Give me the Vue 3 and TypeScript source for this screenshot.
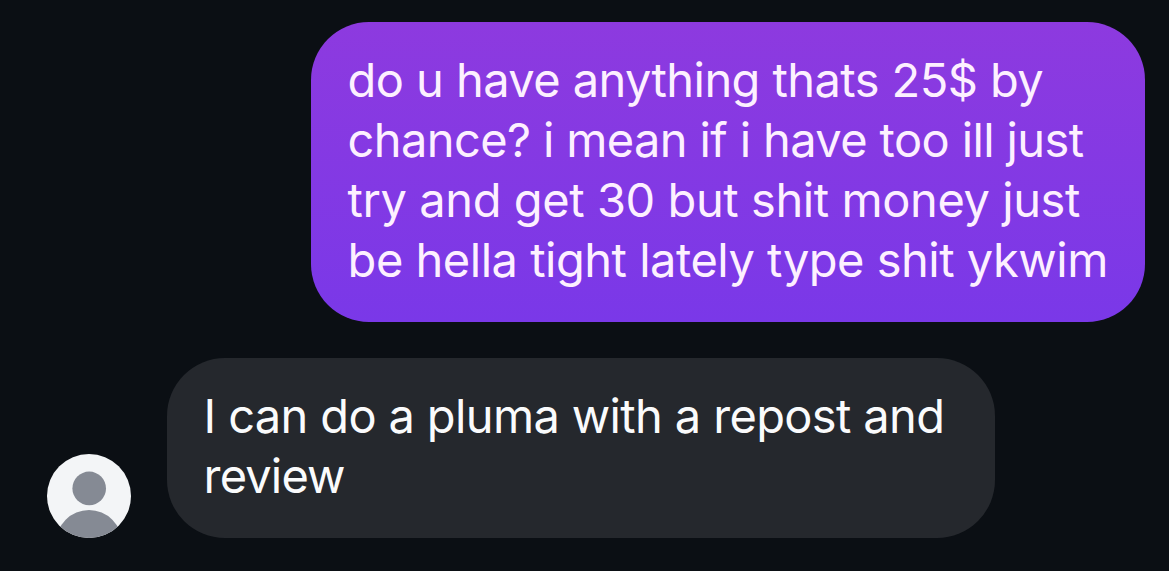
<script setup lang="ts">
interface Line {
  text: string
  fit: string
}

const sent: Line[] = [
  { text: 'do u have anything thats 25$ by', fit: 's1' },
  { text: 'chance? i mean if i have too ill just', fit: 's2' },
  { text: 'try and get 30 but shit money just', fit: 's3' },
  { text: 'be hella tight lately type shit ykwim', fit: 's4' },
]

const received: Line[] = [
  { text: 'I can do a pluma with a repost and', fit: 'r1' },
  { text: 'review', fit: 'r2' },
]
</script>

<template>
  <main class="chat">
    <div class="row row-sent">
      <div class="bubble sent">
        <span v-for="line in sent" :key="line.fit" class="line" :class="line.fit">{{ line.text }}</span>
      </div>
    </div>
    <div class="row row-received">
      <svg class="avatar" viewBox="0 0 84 84" role="img" aria-label="Profile">
        <defs>
          <clipPath id="avatar-clip"><circle cx="42" cy="42" r="42" /></clipPath>
        </defs>
        <g clip-path="url(#avatar-clip)">
          <rect width="84" height="84" fill="#f3f5f7" />
          <circle cx="42.2" cy="34.4" r="16.8" fill="#858a94" />
          <circle cx="42" cy="89" r="33" fill="#858a94" />
        </g>
      </svg>
      <div class="bubble received">
        <span v-for="line in received" :key="line.fit" class="line" :class="line.fit">{{ line.text }}</span>
      </div>
    </div>
  </main>
</template>

<style>
html,
body {
  background: #0b0f14;
}
</style>

<style scoped>
.chat {
  box-sizing: border-box;
  width: 1169px;
  height: 571px;
  padding: 22px 24px 33px 47px;
  display: flex;
  flex-direction: column;
  gap: 36px;
  overflow: hidden;
  background: #0b0f14;
  font-family: Inter, "Liberation Sans", sans-serif;
  font-size: 47px;
  line-height: 60px;
}
.row {
  display: flex;
}
.row-sent {
  justify-content: flex-end;
}
.row-received {
  align-items: flex-end;
  gap: 36px;
}
.bubble {
  box-sizing: border-box;
  padding: 28px 36px 32px 36.6px;
  border-radius: 58px;
}
.sent {
  width: 834px;
  height: 300px;
  background: linear-gradient(#8d3adf, #7a38e8);
  color: #fdf0ff;
}
.received {
  width: 828px;
  height: 180px;
  background: #25282d;
  color: #fafbfc;
}
.line {
  display: block;
  white-space: nowrap;
}
.s1 {
  letter-spacing: -0.57px;
}
.s2 {
  letter-spacing: -0.62px;
}
.s3 {
  letter-spacing: -0.42px;
}
.s4 {
  letter-spacing: -0.49px;
}
.r1 {
  letter-spacing: -0.64px;
}
.r2 {
  letter-spacing: -0.85px;
}
.avatar {
  width: 84px;
  height: 84px;
  flex: none;
}
</style>
